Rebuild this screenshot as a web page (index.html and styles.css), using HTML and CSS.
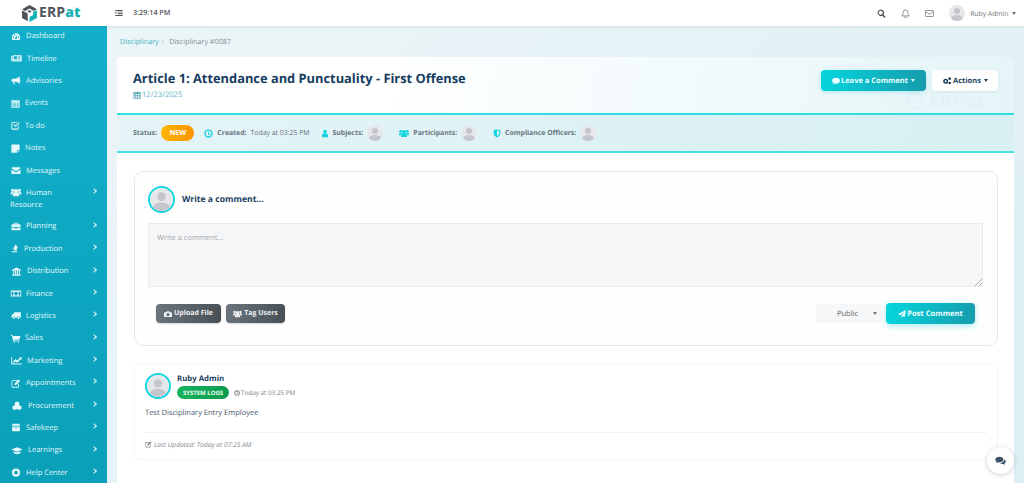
FILE: index.html
```html
<!DOCTYPE html>
<html lang="en">
<head>
<meta charset="utf-8">
<title>Disciplinary #0087</title>
<link rel="stylesheet" href="styles.css">
</head>
<body>
<svg class="sprite" aria-hidden="true">
  <symbol id="gauge" viewBox="0 0 24 24"><path d="M12 3A11.5 11.5 0 0 0 .5 14.5c0 2.400.7 4.500 2 6.500h19c1.300-2 2-4.100 2-6.500A11.500 11.500 0 0 0 12 3zM5 16a2 2 0 1 1 0-4 2 2 0 0 1 0 4zm3-6a2 2 0 1 1 0-4 2 2 0 0 1 0 4zm6 8a2.500 2.500 0 0 1-4.500-1.500c0-1 .6-1.800 1.400-2.200L14 8l.6.2-.6 7c.6.500 1 1.100 1 1.800 0 .4-.4.700-1 1zm5-2a2 2 0 1 1 0-4 2 2 0 0 1 0 4z"/></symbol>
  <symbol id="news" viewBox="0 0 28 24"><path d="M0 5h3v15H2a2 2 0 0 1-2-2zM4 3h24v15a2 2 0 0 1-2 2H4zm3 3v7h8V6zm10 0v1.500h8V6zm0 3v1.500h8V9zm0 3v1.500h8V12zM7 15v1.500h18V15z" fill-rule="evenodd"/></symbol>
  <symbol id="horn" viewBox="0 0 24 24"><path d="M24 11a2.500 2.500 0 0 0-2-2.400V3c0-1-1-1.300-1.700-.7C17 5.500 13.500 7 9 7H3a3 3 0 0 0-3 3v2.500a3 3 0 0 0 3 3h1l1.500 6.500h3.500L7.500 15.500H9c4.500 0 8 1.500 11.300 4.700.7.600 1.700.3 1.700-.7v-6a2.500 2.500 0 0 0 2-2.500z"/></symbol>
  <symbol id="cal" viewBox="0 0 24 24"><path d="M6 1h2v3H6zM16 1h2v3h-2zM2 3h3v2h4V3h6v2h4V3h3a1 1 0 0 1 1 1v18a1 1 0 0 1-1 1H2a1 1 0 0 1-1-1V4a1 1 0 0 1 1-1zm1 6v3h4V9zm6 0v3h4V9zm6 0v3h5V9zM3 14v3h4v-3zm6 0v3h4v-3zm6 0v3h5v-3zM3 19v2h4v-2zm6 0v2h4v-2zm6 0v2h5v-2z" fill-rule="evenodd"/></symbol>
  <symbol id="check" viewBox="0 0 24 24"><path d="M4 3h14l-2 2.500H4.500a1 1 0 0 0-1 1V19a1 1 0 0 0 1 1H17a1 1 0 0 0 1-1v-5l2.500-2.500V20a3 3 0 0 1-3 3H4a3 3 0 0 1-3-3V6a3 3 0 0 1 3-3zM6 10l2-2 4 4L21 3l2 2-11 11z"/></symbol>
  <symbol id="note" viewBox="0 0 24 24"><path d="M2 1h20a1 1 0 0 1 1 1v14h-6a1 1 0 0 0-1 1v6H2a1 1 0 0 1-1-1V2a1 1 0 0 1 1-1zM18 18h5l-5 5z"/></symbol>
  <symbol id="mail" viewBox="0 0 24 24"><path d="M2 3h20a2 2 0 0 1 2 2v1l-12 8L0 6V5a2 2 0 0 1 2-2zM0 9l12 8 12-8v10a2 2 0 0 1-2 2H2a2 2 0 0 1-2-2z"/></symbol>
  <symbol id="users" viewBox="0 0 28 24"><circle cx="14" cy="8" r="5.500"/><circle cx="5" cy="6" r="4"/><circle cx="23" cy="6" r="4"/><path d="M6 22v-5c0-3.500 2.500-5.500 5-5.500h6c2.500 0 5 2 5 5.500v5zM0 15c0-3.500 1.500-5 3-5h4a7 7 0 0 0 .5 2C6 13 5 15 5 17H0zM28 15c0-3.500-1.500-5-3-5h-4a7 7 0 0 1-.5 2c1.500 1 2.500 3 2.500 5h5z"/></symbol>
  <symbol id="case" viewBox="0 0 24 24"><path d="M8 2h8a2 2 0 0 1 2 2v2h4a2 2 0 0 1 2 2v5H0V8a2 2 0 0 1 2-2h4V4a2 2 0 0 1 2-2zm0 4h8V4H8zM0 15h10v2h4v-2h10v5a2 2 0 0 1-2 2H2a2 2 0 0 1-2-2z" fill-rule="evenodd"/></symbol>
  <symbol id="gavel" viewBox="0 0 24 24"><path d="M13 1l6 6-2 8c-1 2-4 3-6 2l-3-3c-1-2 0-4 2-6zM3 19h15v3H3z"/></symbol>
  <symbol id="bank" viewBox="0 0 24 24"><path d="M12 1l12 6v2H0V7zM3 10h3v8H3zM8 10h3v8H8zM13 10h3v8h-3zM18 10h3v8h-3zM1 19h22v4H1z"/></symbol>
  <symbol id="money" viewBox="0 0 28 24"><path d="M0 4h28v16H0zm2 3v10h5V7zm19 0v10h5V7zM14 7a5 5 0 1 0 0 10 5 5 0 0 0 0-10z" fill-rule="evenodd"/></symbol>
  <symbol id="truck" viewBox="0 0 28 24"><path d="M9 3h18v15h-3a3.500 3.500 0 0 0-7 0h-5a3.500 3.500 0 0 0-7 0H2v-6l4-5h3zM8.500 16a2.500 2.500 0 1 1 0 5 2.500 2.500 0 0 1 0-5zM20.500 16a2.500 2.500 0 1 1 0 5 2.500 2.500 0 0 1 0-5z"/></symbol>
  <symbol id="cart" viewBox="0 0 26 24"><path d="M0 2h5l1 3h20l-2.500 10H9l.4 2H23v2.500H7L3.500 4.500H0z"/><circle cx="10" cy="21.500" r="2"/><circle cx="21" cy="21.500" r="2"/></symbol>
  <symbol id="chart" viewBox="0 0 28 24"><path d="M0 3h2.500v17H28v2.500H0zM5 15l6-7 5 4 7-7-2-2h7v7l-2-2-10 10-5-4-4 5z"/></symbol>
  <symbol id="edit" viewBox="0 0 26 24"><path d="M4 3h15l-2.500 2.500h-12a1.500 1.500 0 0 0-1.500 1.500v12a1.500 1.500 0 0 0 1.500 1.500H17a1.500 1.500 0 0 0 1.500-1.500v-5L21 11.500V20a3 3 0 0 1-3 3H4a3 3 0 0 1-3-3V6a3 3 0 0 1 3-3zM9 12L20 1l4 4-11 11H9z"/></symbol>
  <symbol id="cubes" viewBox="0 0 26 24"><path d="M13 1l6 3v7l-6 3-6-3V4zM7 11l6 3v7l-6 3-6-3v-7zM19 11l6 3v7l-6 3-6-3v-7z"/></symbol>
  <symbol id="box" viewBox="0 0 24 24"><path d="M2 2h20v5H2zM2 9h20v13H2zm7 3v2h6v-2z" fill-rule="evenodd"/></symbol>
  <symbol id="grad" viewBox="0 0 30 24"><path d="M15 3l15 6-15 6L0 9zM6 14l9 3.500 9-3.500v4c0 2-4 4-9 4s-9-2-9-4z"/></symbol>
  <symbol id="help" viewBox="0 0 24 24"><path d="M12 1a11 11 0 1 0 0 22 11 11 0 0 0 0-22zm0 6a5 5 0 1 1 0 10 5 5 0 0 1 0-10z" fill-rule="evenodd"/><path d="M5 3l4 5-1.500 1.500-4.500-4zM19 3l2 2-4.500 4.500L15 8zM5 21l-2-2 4.500-4.500L9 16zM19 21l2-2-4.500-4.500L15 16z"/></symbol>
  <symbol id="search" viewBox="0 0 24 24"><path d="M10 1a9 9 0 0 1 7.200 14.400l5.800 5.800-2.800 2.800-5.800-5.800A9 9 0 1 1 10 1zm0 3.500a5.500 5.500 0 1 0 0 11 5.500 5.500 0 0 0 0-11z" fill-rule="evenodd"/></symbol>
  <symbol id="bell" viewBox="0 0 24 24"><path d="M12 2.500a6.500 6.500 0 0 0-6.500 6.500c0 6-2 7-3.500 9.500h20c-1.500-2.500-3.500-3.500-3.500-9.500A6.500 6.500 0 0 0 12 2.500zM9.500 21a2.500 2.500 0 0 0 5 0" fill="none" stroke="currentColor" stroke-width="2"/></symbol>
  <symbol id="env" viewBox="0 0 24 24"><rect x="1" y="4" width="22" height="16" rx="2" fill="none" stroke="currentColor" stroke-width="2"/><path d="M1.500 7l10.500 7 10.500-7" fill="none" stroke="currentColor" stroke-width="2"/></symbol>
  <symbol id="list" viewBox="0 0 24 24"><path d="M1 3h22v3H1zM1 18h22v3H1zM8 8h15v2.500H8zM8 13h15v2.500H8zM1 8l5 3.500L1 15z"/></symbol>
  <symbol id="clock" viewBox="0 0 24 24"><path d="M12 1a11 11 0 1 1 0 22 11 11 0 0 1 0-22zm0 3.500a7.500 7.500 0 1 0 0 15 7.500 7.500 0 0 0 0-15zM11 7h2.500v5.500H17V15h-6z" fill-rule="evenodd"/></symbol>
  <symbol id="person" viewBox="0 0 24 24"><circle cx="12" cy="6.500" r="5.500"/><path d="M3 23v-5c0-4 2.500-6 5-6 1 .8 2.500 1.300 4 1.300s3-.5 4-1.300c2.500 0 5 2 5 6v5z"/></symbol>
  <symbol id="shield" viewBox="0 0 24 24"><path d="M3 1h18a1 1 0 0 1 1 1v11c0 5-6 9-10 11C8 22 2 18 2 13V2a1 1 0 0 1 1-1zm9 3v16c3-1.500 6.500-4.500 6.500-7V4z" fill-rule="evenodd"/></symbol>
  <symbol id="comment" viewBox="0 0 24 24"><path d="M12 2c6.600 0 12 3.800 12 9s-5.400 9-12 9c-1 0-2-.1-3-.3C7.500 21 5 22.500 2 22.500c1.500-1.500 2.500-3 2.700-5C2 16 0 13.700 0 11c0-5.200 5.400-9 12-9z"/></symbol>
  <symbol id="cogs" viewBox="0 0 28 24"><path d="M10 5a7.500 7.500 0 1 1 0 15 7.500 7.500 0 0 1 0-15zm0 4.500a3 3 0 1 0 0 6 3 3 0 0 0 0-6z" fill-rule="evenodd"/><path d="M22 1a4 4 0 1 1 0 8 4 4 0 0 1 0-8zM22 14a4 4 0 1 1 0 8 4 4 0 0 1 0-8z"/></symbol>
  <symbol id="camera" viewBox="0 0 26 24"><path d="M9 3h8l2 3h4a3 3 0 0 1 3 3v10a3 3 0 0 1-3 3H3a3 3 0 0 1-3-3V9a3 3 0 0 1 3-3h4zm4 6a5 5 0 1 0 0 10 5 5 0 0 0 0-10z" fill-rule="evenodd"/></symbol>
  <symbol id="plane" viewBox="0 0 24 24"><path d="M24 0l-4 21-6.500-3L10 23v-6L20 5 7 15.500 0 12z"/></symbol>
  <symbol id="chats" viewBox="0 0 28 24"><path d="M11 2c6 0 11 3 11 7.500S17 17 11 17c-1 0-2 0-3-.3C6.500 18 4.500 19 2 19c1-1 2-2.500 2-4-2.500-1.300-4-3.200-4-5.500C0 5 5 2 11 2z"/><path d="M24 9.500c2.500 1.200 4 3 4 5.200 0 2-1.200 3.700-3 4.800 0 1.500.8 2.500 1.800 3.500-2.300 0-4-1-5.300-2-2.500.4-6.500 0-8.500-2.500 5.500 0 11-3 11-9z"/></symbol>
  <symbol id="avatar" viewBox="0 0 40 40"><rect width="40" height="40" fill="#e6e7ea"/><circle cx="20" cy="15" r="7.500" fill="#c4c6cb"/><ellipse cx="20" cy="35" rx="15" ry="10" fill="#c4c6cb"/></symbol>
  <symbol id="mark" viewBox="0 0 24 24"><path d="M12 0l10.500 6-5 2.800L12 5.500 6.500 8.800l-5-2.800zM1.500 8l5 2.800v5.500l-5 2.700zM22.500 8v11l-5-2.700v-5.500zM7.500 18l4.500 2.500 4.500-2.500 5 2.800L12 24l-9.500-3.200z"/></symbol>
</svg>

<div class="app">
  <header class="topbar">
    <div class="brand">
      <svg class="brand-mark" viewBox="0 0 24 24"><path d="M12 0l10.500 6-4.500 2.500L12 5 6 8.500 1.500 6z" fill="#4c5459"/><path d="M1.500 7.500l8 4.500v11l-8-4.500z" fill="#4c5459"/><path d="M22.500 7.500v11L12 24v-7l5-3v-4z" fill="#17b3bb"/><path d="M9 9l3-1.800L15 9l-3 1.800z" fill="#4c5459"/></svg>
      <span class="brand-name">ERP<b>at</b></span>
    </div>
    <div class="topbar-main">
      <svg class="ic ic-list"><use href="#list"/></svg>
      <span class="clock">3:29:14 PM</span>
      <div class="topbar-tools">
        <svg class="ic tool tool-search"><use href="#search"/></svg>
        <svg class="ic tool"><use href="#bell"/></svg>
        <svg class="ic tool"><use href="#env"/></svg>
        <svg class="top-avatar"><use href="#avatar"/></svg>
        <span class="user-name">Ruby Admin</span>
        <i class="caret"></i>
      </div>
    </div>
  </header>

  <nav class="sidebar">
    <a class="nav-item"><svg class="ic w12"><use href="#gauge"/></svg><span>Dashboard</span></a>
    <a class="nav-item"><svg class="ic w13"><use href="#news"/></svg><span>Timeline</span></a>
    <a class="nav-item"><svg class="ic w12"><use href="#horn"/></svg><span>Advisories</span></a>
    <a class="nav-item"><svg class="ic w11"><use href="#cal"/></svg><span>Events</span></a>
    <a class="nav-item"><svg class="ic w11"><use href="#check"/></svg><span>To do</span></a>
    <a class="nav-item"><svg class="ic w11"><use href="#note"/></svg><span>Notes</span></a>
    <a class="nav-item"><svg class="ic w12"><use href="#mail"/></svg><span>Messages</span></a>
    <a class="nav-item nav-wrap more"><span class="nav-line"><svg class="ic w12"><use href="#users"/></svg><span>Human</span></span><span class="nav-second">Resource</span></a>
    <a class="nav-item more"><svg class="ic w12"><use href="#case"/></svg><span>Planning</span></a>
    <a class="nav-item more"><svg class="ic w10"><use href="#gavel"/></svg><span>Production</span></a>
    <a class="nav-item more"><svg class="ic w13"><use href="#bank"/></svg><span>Distribution</span></a>
    <a class="nav-item more"><svg class="ic w12"><use href="#money"/></svg><span>Finance</span></a>
    <a class="nav-item more"><svg class="ic w12"><use href="#truck"/></svg><span>Logistics</span></a>
    <a class="nav-item more"><svg class="ic w11"><use href="#cart"/></svg><span>Sales</span></a>
    <a class="nav-item more"><svg class="ic w13"><use href="#chart"/></svg><span>Marketing</span></a>
    <a class="nav-item more"><svg class="ic w12"><use href="#edit"/></svg><span>Appointments</span></a>
    <a class="nav-item more"><svg class="ic w14"><use href="#cubes"/></svg><span>Procurement</span></a>
    <a class="nav-item more"><svg class="ic w12"><use href="#box"/></svg><span>Safekeep</span></a>
    <a class="nav-item more"><svg class="ic w14"><use href="#grad"/></svg><span>Learnings</span></a>
    <a class="nav-item more"><svg class="ic w12"><use href="#help"/></svg><span>Help Center</span></a>
  </nav>

  <main class="content">
    <div class="crumbs"><a>Disciplinary</a><span class="sep">/</span><span>Disciplinary #0087</span></div>
    <section class="panel">
      <div class="panel-head">
        <div>
          <h1>Article 1: Attendance and Punctuality - First Offense</h1>
          <div class="date"><svg class="ic"><use href="#cal"/></svg>12/23/2025</div>
        </div>
        <div class="head-actions">
          <button class="btn btn-teal btn-leave"><svg class="ic"><use href="#comment"/></svg>Leave a Comment<i class="caret"></i></button>
          <button class="btn btn-white"><svg class="ic ic-cogs"><use href="#cogs"/></svg>Actions<i class="caret"></i></button>
        </div>
        <span class="watermark"><svg class="watermark-mark"><use href="#mark"/></svg>ERPat</span>
      </div>

      <div class="status-bar">
        <span class="meta status-meta"><b>Status:</b><span class="pill-new">NEW</span></span>
        <span class="meta created"><svg class="ic ic-cy ic-clock"><use href="#clock"/></svg><b>Created:</b><span class="meta-val">Today at 03:25 PM</span></span>
        <span class="meta subjects"><svg class="ic ic-cy ic-person"><use href="#person"/></svg><b>Subjects:</b><svg class="mini-avatar"><use href="#avatar"/></svg></span>
        <span class="meta participants"><svg class="ic ic-cy ic-users"><use href="#users"/></svg><b>Participants:</b><svg class="mini-avatar"><use href="#avatar"/></svg></span>
        <span class="meta"><svg class="ic ic-cy ic-shield"><use href="#shield"/></svg><b>Compliance Officers:</b><svg class="mini-avatar"><use href="#avatar"/></svg></span>
      </div>

      <div class="panel-body">
        <div class="composer">
          <div class="composer-head">
            <span class="ring"><svg><use href="#avatar"/></svg></span>
            <strong>Write a comment...</strong>
          </div>
          <textarea class="comment-input" placeholder="Write a comment..."></textarea>
          <div class="composer-foot">
            <button class="btn btn-dark"><svg class="ic"><use href="#camera"/></svg>Upload File</button>
            <button class="btn btn-dark"><svg class="ic ic-wide"><use href="#users"/></svg>Tag Users</button>
            <div class="privacy"><span>Public</span><i class="caret caret-sm"></i></div>
            <button class="btn btn-teal btn-post"><svg class="ic"><use href="#plane"/></svg>Post Comment</button>
          </div>
        </div>

        <article class="entry">
          <div class="entry-head">
            <span class="ring ring-entry"><svg><use href="#avatar"/></svg></span>
            <div>
              <strong class="entry-name">Ruby Admin</strong>
              <div class="entry-sub"><span class="pill-log">SYSTEM LOGS</span><span class="entry-time"><svg class="ic"><use href="#clock"/></svg>Today at 03:25 PM</span></div>
            </div>
          </div>
          <p class="entry-text">Test Disciplinary Entry Employee</p>
          <div class="entry-foot"><svg class="ic"><use href="#edit"/></svg>Last Updated: Today at 07:25 AM</div>
        </article>
      </div>
    </section>
  </main>
  <button class="fab" aria-label="Chat"><svg class="ic"><use href="#chats"/></svg></button>
</div>
</body>
</html>
```

FILE: styles.css
```css
* { box-sizing: border-box; }
html, body { margin: 0; height: 100%; overflow: hidden; }
body { font-family: "Open Sans", "Liberation Sans", sans-serif; color: #1d3f5e; background: #fff; text-rendering: geometricPrecision; }
.sprite { position: absolute; width: 0; height: 0; }
.ic { display: block; flex: none; width: 10px; height: 10px; fill: currentColor; }

.app { display: grid; grid-template-columns: 107px 1fr; grid-template-rows: 26px 1fr; height: 483px; width: 1024px; overflow: hidden; position: relative; }

.topbar { grid-column: 1 / 3; display: flex; background: #fff; box-shadow: 0 1px 2px rgba(60, 90, 100, .12); position: relative; z-index: 2; }
.brand { width: 107px; display: flex; align-items: center; justify-content: flex-start; padding-left: 21px; gap: 1px; }
.brand-mark { width: 17px; height: 17px; flex: none; }
.brand-name { font-weight: 700; font-size: 14px; letter-spacing: .1px; color: #50575c; line-height: 1; }
.brand-name b { color: #17b2b4; }
.topbar-main { flex: 1; display: flex; align-items: center; padding-left: 8px; padding-right: 8.500px; }
.ic-list { width: 8px; height: 8px; color: #4d5358; }
.clock { margin-left: 10px; font-size: 7.200px; font-weight: 600; color: #4f5459; }
.topbar-tools { margin-left: auto; display: flex; align-items: center; color: #6a7075; }
.tool { width: 9px; height: 9px; margin-right: 15px; }
.tool-search { color: #4c5257; }
.top-avatar { width: 16px; height: 16px; border-radius: 50%; margin-left: 0; margin-right: 5px; }
.user-name { font-size: 6.800px; color: #70757a; }

.caret { display: inline-block; width: 0; height: 0; border-left: 2.500px solid transparent; border-right: 2.500px solid transparent; border-top: 3px solid currentColor; margin-left: 3px; }
.caret-sm { border-left-width: 2px; border-right-width: 2px; border-top-width: 3px; color: #777; }

.sidebar { background: linear-gradient(180deg, #12afca 0%, #0aa0ba 100%); color: #eaf9fc; margin-top: -1px; overflow: hidden; }
.nav-item { display: flex; align-items: center; min-height: 22.400px; padding-left: 10px; font-size: 7.500px; position: relative; color: #e6f8fb; }
.nav-item > .ic { margin-right: 4px; }
.w10 { width: 10px; } .w11 { width: 11px; } .w12 { width: 12px; } .w13 { width: 13px; } .w14 { width: 14px; }
.nav-item .ic { height: 9px; }
.more::after { content: ""; position: absolute; right: 11px; top: 7.500px; width: 3px; height: 3px; border-top: 1px solid #dff5f8; border-right: 1px solid #dff5f8; transform: rotate(45deg); }
.nav-wrap { display: block; padding-top: 5px; min-height: 33.500px; line-height: 12px; }
.nav-wrap::after { top: 7px; }
.nav-line { display: flex; align-items: center; }
.nav-line .ic { margin-right: 4px; }
.nav-second { display: block; }

.content { background: linear-gradient(135deg, #ecf5f8 0%, #dcEff3 100%); padding: 11px 10px 0; min-width: 0; overflow: hidden; }
.crumbs { display: flex; font-size: 7.200px; color: #7d8a90; gap: 3px; height: 20px; padding-left: 3px; line-height: 10px; }
.crumbs a { color: #3fb0c4; }
.sep { color: #b5bfc4; margin-right: 2px; }

.panel { background: #fff; border-radius: 4px 8px 0 0; height: 426px; overflow: hidden; }
.panel-head { height: 56px; display: flex; justify-content: space-between; padding: 13px 16px 0; background: linear-gradient(100deg, #fff 30%, #e4f5f8 100%); position: relative; }
h1 { margin: 0; font-size: 12.850px; font-weight: 700; color: #163c5f; line-height: 16px; }
.date { display: flex; align-items: center; gap: 1px; margin-top: 3px; font-size: 7.600px; color: #58b6c6; line-height: 12px; }
.date .ic { width: 8px; height: 8px; color: #58a9b8; }
.head-actions { display: flex; gap: 6px; position: relative; z-index: 1; height: 21px; }
.watermark { position: absolute; right: 30px; top: 34px; display: flex; align-items: center; gap: 4px; font-size: 19px; font-weight: 700; line-height: 20px; color: #dcecf0; opacity: .35; }
.watermark-mark { width: 20px; height: 20px; fill: currentColor; }

.btn { display: inline-flex; align-items: center; justify-content: center; border: 0; border-radius: 4px; font-family: inherit; font-weight: 700; font-size: 7.500px; padding: 0; text-rendering: geometricPrecision; }
.btn .ic { width: 8px; height: 8px; margin-right: 1px; }
.btn-teal { color: #eaffff; background: linear-gradient(100deg, #05d6de 0%, #179bac 100%); box-shadow: 0 1px 4px rgba(20, 190, 210, .3); }
.btn-leave { width: 105px; height: 21px; }
.btn-white { width: 66px; height: 21px; color: #1d3f5e; background: #fff; box-shadow: 0 1px 3px rgba(60, 100, 110, .12); }
.ic-cogs { width: 10px !important; }

.status-bar { height: 40px; display: flex; align-items: center; padding-left: 16px; background: linear-gradient(100deg, #e4f4f7 0%, #d8f0f3 100%); border-top: 2px solid #2fdde3; border-bottom: 2px solid #4be0e6; font-size: 6.900px; color: #64707e; }
.meta { display: flex; align-items: center; }
.meta b { font-weight: 700; color: #68737f; }
.status-meta { margin-right: 10px; }
.pill-new { margin-left: 4.500px; width: 33px; height: 16px; border-radius: 8px; display: inline-flex; align-items: center; justify-content: center; color: #fff; font-weight: 700; font-size: 7.200px; background: linear-gradient(100deg, #ffb703, #fb9300); }
.created { margin-right: 11px; }
.meta-val { margin-left: 4px; font-weight: 400; }
.ic-cy { color: #13d4de; margin-right: 4px; }
.ic-clock { width: 9px; height: 9px; }
.ic-person { width: 8px; height: 9px; }
.ic-users { width: 10px; height: 9px; }
.ic-shield { width: 8px; height: 9px; }
.subjects { margin-right: 16px; }
.participants { margin-right: 16px; }
.mini-avatar { width: 16px; height: 16px; border-radius: 50%; margin-left: 4px; }

.panel-body { padding: 18px 16px 0 17px; }
.composer { height: 175px; border: 1px solid #e6e8e8; border-radius: 9px; padding: 14px 14px 0 13px; background: #fefefe; }
.composer-head { display: flex; align-items: center; gap: 7px; font-size: 8.600px; color: #1b3f5f; }
.composer-head strong { font-weight: 700; position: relative; top: -1px; }
.ring { width: 27px; height: 27px; border-radius: 50%; border: 2px solid #14d6e0; padding: 0; display: block; flex: none; overflow: hidden; background: #fff; }
.ring svg { width: 100%; height: 100%; border-radius: 50%; display: block; }
.comment-input { display: block; width: 835px; height: 64px; margin-top: 10px; padding: 9px 8px; background: #f5f6f8; border: 1px solid #e8eaec; font-family: inherit; font-size: 7.500px; color: #555; border-radius: 0; text-rendering: geometricPrecision; }
.comment-input::placeholder { color: #a2a6aa; opacity: 1; }
.comment-input::-webkit-resizer { background: linear-gradient(135deg, transparent 45%, #b5b5b5 45% 57%, transparent 57% 72%, #b5b5b5 72% 84%, transparent 84%) right bottom / 7px 7px no-repeat; }
.composer-foot { display: flex; align-items: center; height: 21px; margin-top: 16px; padding: 0 8px; gap: 5px; }
.btn-dark { height: 19px; width: 65px; font-size: 7px; color: #eef1f3; border-radius: 4px; background: linear-gradient(100deg, #6c757d, #474f55); box-shadow: 0 1px 2px rgba(0, 0, 0, .15); }
.btn-dark .ic { margin-right: 2px; }
.btn-dark + .btn-dark { width: 59px; }
.btn-dark .ic-wide { width: 9px; }
.privacy { margin-left: auto; width: 65px; height: 19px; background: #f6f7f9; display: flex; align-items: center; font-size: 7.500px; color: #666; padding-left: 21px; border-radius: 2px; }
.privacy .caret { margin-left: 15px; }
.btn-post { width: 89px; height: 21px; font-size: 7.600px; box-shadow: 0 2px 6px rgba(20, 200, 225, .35); }

.entry { margin-top: 17px; height: 97px; border: 1px solid #eefaf9; border-radius: 6px; padding: 9px 10px 0; }
.entry-head { display: flex; gap: 6px; }
.ring-entry { width: 26px; height: 26px; }
.entry-name { display: block; margin-top: 1px; font-size: 7.800px; font-weight: 700; color: #1b3f5f; line-height: 11px; }
.entry-sub { display: flex; align-items: center; margin-top: 1px; }
.pill-log { width: 52px; height: 13px; border-radius: 7px; display: inline-flex; align-items: center; justify-content: center; background: linear-gradient(100deg, #15b25c, #0f9a4e); color: #e9fff2; font-size: 6px; font-weight: 700; white-space: nowrap; }
.entry-time { display: flex; align-items: center; margin-left: 5px; font-size: 6.350px; color: #767d84; gap: 1px; }
.entry-time .ic { width: 6px; height: 6px; }
.entry-text { margin: 8px 0 0; font-size: 7.500px; color: #43566a; line-height: 12px; }
.entry-foot { margin-top: 13px; padding-top: 7px; border-top: 1px solid #eef6f5; display: flex; align-items: center; gap: 2px; font-size: 6.700px; font-style: italic; color: #838a90; line-height: 9px; }
.entry-foot .ic { width: 7px; height: 7px; }

.fab { position: absolute; left: 987px; top: 447px; width: 27px; height: 27px; border: 0; border-radius: 50%; background: #fff; box-shadow: 0 1px 5px rgba(0, 0, 0, .2); display: flex; align-items: center; justify-content: center; color: #3d5468; padding: 0; }
.fab .ic { width: 11px; height: 9px; }
```
